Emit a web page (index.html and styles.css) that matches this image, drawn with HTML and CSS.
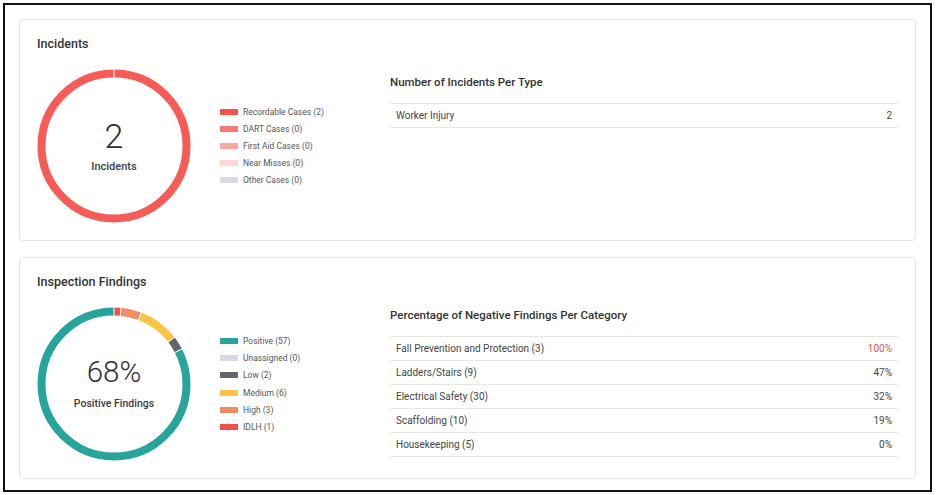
FILE: index.html
```html
<!DOCTYPE html>
<html lang="en">
<head>
<meta charset="utf-8">
<title>Safety Dashboard</title>
<link rel="stylesheet" href="styles.css">
</head>
<body>
<div class="frame">
  <section class="card">
    <h2 class="card-title">Incidents</h2>
    <div class="card-body">
      <div class="chart-area">
        <div class="donut">
          <svg class="ring" viewBox="0 0 154 154" width="154" height="154">
            <circle cx="77" cy="77" r="72.5" fill="none" stroke="#f65c57" stroke-width="8"/>
            <line x1="77" y1="0" x2="77" y2="9" stroke="#fff" stroke-width="1"/>
          </svg>
          <div class="donut-center">
            <div class="big big-incidents">2</div>
            <div class="sub sub-incidents">Incidents</div>
          </div>
        </div>
        <ul class="legend">
          <li><span class="sw" style="background:#f5524f"></span>Recordable Cases (2)</li>
          <li><span class="sw" style="background:#f77a76"></span>DART Cases (0)</li>
          <li><span class="sw" style="background:#f9a8a4"></span>First Aid Cases (0)</li>
          <li><span class="sw" style="background:#fcd7d5"></span>Near Misses (0)</li>
          <li><span class="sw" style="background:#d9dae0"></span>Other Cases (0)</li>
        </ul>
      </div>
      <div class="side side-incidents">
        <h3 class="side-title">Number of Incidents Per Type</h3>
        <table class="tbl">
          <tr><td>Worker Injury</td><td class="num">2</td></tr>
        </table>
      </div>
    </div>
  </section>

  <section class="card">
    <h2 class="card-title">Inspection Findings</h2>
    <div class="card-body">
      <div class="chart-area">
        <div class="donut">
          <svg class="ring" viewBox="0 0 154 154" width="154" height="154">
            <g transform="rotate(-90 77 77)" fill="none" stroke-width="8">
              <circle cx="77" cy="77" r="72.5" stroke="#f1504c" stroke-dasharray="6.602 455.53" stroke-dashoffset="0"/>
              <circle cx="77" cy="77" r="72.5" stroke="#f28c64" stroke-dasharray="19.806 455.53" stroke-dashoffset="-6.602"/>
              <circle cx="77" cy="77" r="72.5" stroke="#fbc447" stroke-dasharray="39.611 455.53" stroke-dashoffset="-26.408"/>
              <circle cx="77" cy="77" r="72.5" stroke="#63646c" stroke-dasharray="13.204 455.53" stroke-dashoffset="-66.019"/>
              <circle cx="77" cy="77" r="72.5" stroke="#27a59d" stroke-dasharray="376.31 455.53" stroke-dashoffset="-79.223"/>
            </g>
            <g stroke="#fff" stroke-width="1">
              <line x1="77" y1="0" x2="77" y2="9"/>
              <line x1="77" y1="0" x2="77" y2="9" transform="rotate(5.217 77 77)"/>
              <line x1="77" y1="0" x2="77" y2="9" transform="rotate(20.87 77 77)"/>
              <line x1="77" y1="0" x2="77" y2="9" transform="rotate(52.17 77 77)"/>
              <line x1="77" y1="0" x2="77" y2="9" transform="rotate(62.61 77 77)"/>
            </g>
          </svg>
          <div class="donut-center">
            <div class="big big-findings">68%</div>
            <div class="sub sub-findings">Positive Findings</div>
          </div>
        </div>
        <ul class="legend">
          <li><span class="sw" style="background:#27a59d"></span>Positive (57)</li>
          <li><span class="sw" style="background:#d9dae0"></span>Unassigned (0)</li>
          <li><span class="sw" style="background:#63646c"></span>Low (2)</li>
          <li><span class="sw" style="background:#fbc447"></span>Medium (6)</li>
          <li><span class="sw" style="background:#f28c64"></span>High (3)</li>
          <li><span class="sw" style="background:#f1504c"></span>IDLH (1)</li>
        </ul>
      </div>
      <div class="side side-findings">
        <h3 class="side-title">Percentage of Negative Findings Per Category</h3>
        <table class="tbl">
          <tr><td>Fall Prevention and Protection (3)</td><td class="num num-alert">100%</td></tr>
          <tr><td>Ladders/Stairs (9)</td><td class="num">47%</td></tr>
          <tr><td>Electrical Safety (30)</td><td class="num">32%</td></tr>
          <tr><td>Scaffolding (10)</td><td class="num">19%</td></tr>
          <tr><td>Housekeeping (5)</td><td class="num">0%</td></tr>
        </table>
      </div>
    </div>
  </section>
</div>
</body>
</html>
```

FILE: styles.css
```css
* { box-sizing: border-box; }

html, body {
  margin: 0;
  padding: 0;
  background: #fff;
}

body {
  font-family: Roboto, "Liberation Sans", Arial, sans-serif;
  color: #333;
}

.frame {
  margin: 3px;
  width: 929px;
  height: 489px;
  border: 2px solid #111;
  padding: 14px 14px 0 14px;
  display: flex;
  flex-direction: column;
  gap: 16px;
}

.card {
  height: 222px;
  border: 1px solid #e4e4e6;
  border-radius: 4px;
  padding: 16px 17px 0 17px;
  background: #fff;
}

.card-title {
  margin: 0 0 17px 0;
  font-size: 12.5px;
  line-height: 16px;
  font-weight: 500;
  color: #333;
}

.card-body {
  display: flex;
  align-items: flex-start;
}

.chart-area {
  width: 353px;
  flex: none;
  display: flex;
  align-items: center;
}

.donut {
  width: 154px;
  height: 154px;
  display: grid;
}

.ring,
.donut-center {
  grid-area: 1 / 1;
}

.ring { display: block; }

.donut-center {
  display: flex;
  flex-direction: column;
  align-items: center;
  justify-content: center;
  color: #2f3035;
}

.big {
  font-weight: 300;
}

.big-incidents {
  font-size: 34px;
  line-height: 34px;
  margin-bottom: 7px;
}

.big-findings {
  font-size: 29.5px;
  line-height: 30px;
  margin-bottom: 10px;
}

.sub {
  font-weight: 500;
  line-height: 14px;
  color: #3a3b40;
}

.sub-incidents { font-size: 11px; }
.sub-findings { font-size: 10.5px; }

.legend {
  list-style: none;
  margin: 0 0 0 29px;
  padding: 0;
}

.legend li {
  display: flex;
  align-items: center;
  height: 17.2px;
  font-size: 8.5px;
  color: #555;
  white-space: nowrap;
}

.sw {
  width: 18px;
  height: 6px;
  margin-right: 5px;
  flex: none;
}

.side {
  flex: 1;
}

.side-incidents { padding-top: 5.5px; }
.side-findings { padding-top: 0.5px; }

.side-title {
  margin: 0 0 13px 0;
  font-size: 11.5px;
  line-height: 15px;
  font-weight: 500;
  color: #333;
}

.tbl {
  width: 100%;
  border-collapse: collapse;
}

.tbl td {
  height: 24px;
  padding: 0 6px;
  border-top: 1px solid #e7e7e9;
  border-bottom: 1px solid #e7e7e9;
  font-size: 10px;
  color: #444;
  vertical-align: middle;
}

.tbl .num {
  text-align: right;
}

.tbl .num-alert {
  color: #d9534f;
}
```
